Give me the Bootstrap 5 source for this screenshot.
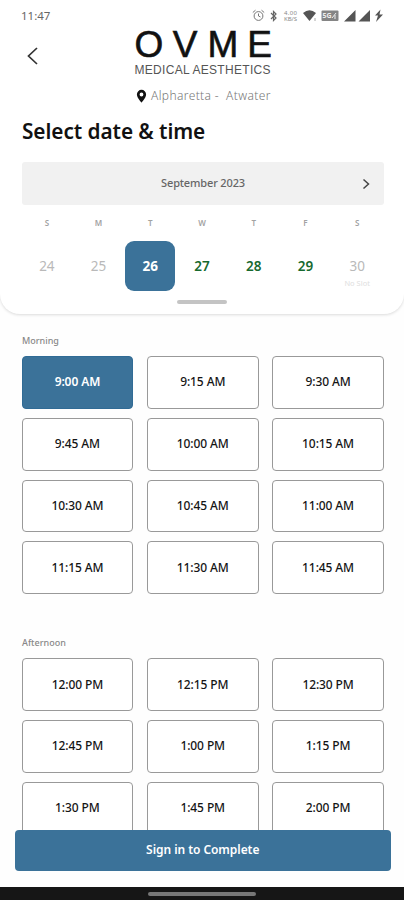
<!DOCTYPE html>
<html lang="en">
<head>
<meta charset="utf-8">
<meta name="viewport" content="width=device-width, initial-scale=1">
<title>Select date &amp; time</title>
<link href="https://cdn.jsdelivr.net/npm/bootstrap@5.3.0/dist/css/bootstrap.min.css" rel="stylesheet">
<style>
body{font-family:"Noto Sans",sans-serif;background:#fefefe;color:#151515;height:900px;overflow:hidden}
.screen{width:404px;height:900px;overflow:hidden}
.sheet{height:314px;background:#fff;border-radius:0 0 20px 20px;box-shadow:0 1px 3px rgba(0,0,0,.14)}
.statusbar{height:30px;padding:1px 19px 0 21px;font-size:11.5px;color:#666}
.brandrow{height:87px;padding-left:22px}
.backbtn{width:22px;height:24px;margin-top:14px}
.brand{width:146px;margin-left:87px}
.brand svg{overflow:visible}
.place{font-size:12px;font-weight:300;color:#777;line-height:16px;margin-top:12px;padding-left:5px;white-space:pre;letter-spacing:.38px}
.heading{font-size:20.8px;font-weight:600;line-height:28px;height:45px;padding:0 0 0 22px;color:#111;letter-spacing:-.07px;white-space:nowrap}
.monthbar{height:43px;margin:0 20px 0 22px;background:#f1f1f1;border-radius:3px;font-size:11px;font-weight:500;color:#666;letter-spacing:-.15px}
.week{margin:0 21px;display:grid;grid-template-columns:repeat(7,1fr)}
.dow{font-size:8px;font-weight:600;color:#a2a2a2;height:36px;line-height:35px;text-align:center}
.day{height:50px;line-height:51px;text-align:center;font-size:13.5px;color:#b9b9b9}
.open-day{color:#17692e;font-weight:600}
.picked{background:#3b7299;color:#fff;font-weight:700;border-radius:9px;margin:0 .8px}
.noslot{font-size:7.5px;line-height:8px;color:#dedede;margin-top:-13px}
.grip{width:50px;height:4px;border-radius:2px;background:#c4c4c4;margin:9px auto 0}
.period{font-size:9px;line-height:14px;font-weight:500;color:#888;margin-left:22px}
.slots{display:grid;grid-template-columns:repeat(3,1fr);column-gap:13.5px;row-gap:9px;margin:8px 20px 0 21.5px}
.later{margin-top:18px}
.slot{height:52.8px;padding:0;border:1px solid #999;border-radius:4px;font-size:12px;font-weight:500;letter-spacing:-.1px;color:#151515;background:#fff}
.slot.chosen{background:#3b7299;border-color:#306b95;color:#fff;font-weight:600}
.footer-area{height:70px;background:#161616}
.cta-wrap{height:57px;background:#fefefe;padding:0 13px 0 14.5px}
.cta{height:41px;border-radius:4px;background:#3b7299;color:#fff;font-size:12px;font-weight:600;border:0;letter-spacing:-.05px;padding:0 0 1px}
.homebar{height:13px}
.homebar span{width:108px;height:4px;border-radius:2px;background:#777}
</style>
<script src="https://cdn.jsdelivr.net/npm/bootstrap@5.3.0/dist/js/bootstrap.bundle.min.js"></script>
</head>
<body>
<main class="screen d-flex flex-column">
<section class="sheet flex-shrink-0">
 <div class="statusbar d-flex align-items-center justify-content-between">
  <span>11:47</span>
  <svg width="134" height="16" viewBox="251 8 134 16" fill="none" stroke="#777">
   <circle cx="258.500" cy="16" r="4.400"/><path d="M258.500 13.500V16l2 1M252.800 12.500l2.700-2.300M264.200 12.500l-2.700-2.300"/>
   <path stroke="#666" stroke-width="1.200" d="M271 13l5 5-2.500 2.500v-9L276 14l-5 5"/>
   <g font-family="Noto Sans,sans-serif" font-size="6" stroke="none" fill="#888"><text x="284" y="15" textLength="13">4.00</text><text x="284" y="21" textLength="13">KB/S</text></g>
   <path fill="#555" stroke="none" d="M303 13q6.500-5.500 13 0l-6.500 8z"/><path stroke="#aaa" d="M315 18v3"/>
   <rect x="321.500" y="10.500" width="17" height="10.500" rx="1" fill="#858585" stroke="none"/>
   <text x="322.500" y="18" font-family="Noto Sans,sans-serif" font-size="7" font-weight="700" fill="#eee" stroke="none" textLength="9">5G</text><path stroke="#eee" d="M332 18l4-5M335 19v-4"/>
   <path fill="#555" stroke="none" d="M344 21.500h11.500V10zM358.500 21.500H370V10zM380.500 9.500l-5.500 6h3l-2 6.500 7-7.500h-3.500z"/>
  </svg>
 </div>
 <div class="brandrow d-flex">
  <button class="backbtn btn p-0 border-0 d-flex" aria-label="Back"><svg width="22" height="24" viewBox="22 44 22 24" fill="none" stroke="#333" stroke-width="1.700"><path d="M37 48l-8.500 8L37 64"/></svg></button>
  <div class="brand">
   <svg class="d-block" width="144" height="46" viewBox="131 30 144 46" fill="#111">
    <g font-family="Liberation Sans,sans-serif" font-size="37"><text y="57" x="134.400 172.700 207.600 247.300" stroke="#111" stroke-width=".6">OVME</text></g>
    <text x="134.500" y="73.500" font-family="Liberation Sans,sans-serif" font-size="12" textLength="136" lengthAdjust="spacing" fill="#555">MEDICAL AESTHETICS</text>
   </svg>
   <div class="place d-flex align-items-center"><svg class="me-1 flex-shrink-0" width="11" height="14" viewBox="0 0 11 14"><path fill="#111" fill-rule="evenodd" d="M5.500.8A4.600 4.600 0 0 0 .9 5.400C.9 8.800 5.500 13.500 5.500 13.500S10.100 8.800 10.100 5.400A4.600 4.600 0 0 0 5.500.8zm0 2.800a1.900 1.900 0 1 1 0 3.800 1.900 1.900 0 0 1 0-3.800z"/></svg><span>Alpharetta -  Atwater</span></div>
  </div>
 </div>
 <h1 class="heading mb-0">Select date &amp; time</h1>
 <div class="monthbar position-relative d-flex align-items-center justify-content-center">September 2023
  <svg class="position-absolute end-0 me-2" width="20" height="18" viewBox="0 0 20 18" fill="none" stroke="#444" stroke-width="1.500"><path d="M7.500 4.500L12.500 9l-5 4.500"/></svg>
 </div>
 <div class="week">
  <div class="dow">S</div><div class="dow">M</div><div class="dow">T</div><div class="dow">W</div><div class="dow">T</div><div class="dow">F</div><div class="dow">S</div>
  <div class="day">24</div><div class="day">25</div><div class="day picked">26</div><div class="day open-day">27</div><div class="day open-day">28</div><div class="day open-day">29</div><div class="day">30<div class="noslot">No Slot</div></div>
 </div>
 <div class="grip"></div>
</section>
<section class="flex-grow-1 overflow-hidden">
 <div class="period pt-1 mt-3">Morning</div>
 <div class="slots">
  <button class="btn slot chosen">9:00 AM</button><button class="btn slot">9:15 AM</button><button class="btn slot">9:30 AM</button>
  <button class="btn slot">9:45 AM</button><button class="btn slot">10:00 AM</button><button class="btn slot">10:15 AM</button>
  <button class="btn slot">10:30 AM</button><button class="btn slot">10:45 AM</button><button class="btn slot">11:00 AM</button>
  <button class="btn slot">11:15 AM</button><button class="btn slot">11:30 AM</button><button class="btn slot">11:45 AM</button>
 </div>
 <div class="period pt-4 later">Afternoon</div>
 <div class="slots">
  <button class="btn slot">12:00 PM</button><button class="btn slot">12:15 PM</button><button class="btn slot">12:30 PM</button>
  <button class="btn slot">12:45 PM</button><button class="btn slot">1:00 PM</button><button class="btn slot">1:15 PM</button>
  <button class="btn slot">1:30 PM</button><button class="btn slot">1:45 PM</button><button class="btn slot">2:00 PM</button>
 </div>
</section>
<footer class="footer-area flex-shrink-0">
 <div class="cta-wrap"><button class="btn cta w-100">Sign in to Complete</button></div>
 <div class="homebar d-flex align-items-center justify-content-center"><span></span></div>
</footer>
</main>
</body>
</html>
